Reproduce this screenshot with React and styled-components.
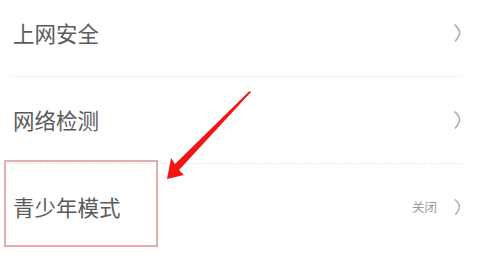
import React from "react";
import styled, { createGlobalStyle } from "styled-components";

const Global = createGlobalStyle`
  html, body { margin: 0; padding: 0; background: #ffffff; }
  body { width: 480px; height: 270px; overflow: hidden; font-family: "Noto Sans CJK SC", "Noto Sans", sans-serif; }
`;

const Page = styled.div`
  position: relative;
  width: 480px;
  height: 270px;
  overflow: hidden;
  background: #fff;
`;

const List = styled.div`
  display: flex;
  flex-direction: column;
  margin-top: -10px;
  padding-right: 18px;
`;

const Row = styled.div`
  height: 86px;
  display: flex;
  align-items: center;
  justify-content: space-between;
  margin-left: ${(p) => (p.$fullLine ? "0" : "10px")};
  padding-left: ${(p) => (p.$fullLine ? "13px" : "3px")};
  border-bottom: ${(p) =>
    p.$line === "solid" ? "1px solid #f3f3f3" : p.$line === "dotted" ? "1px dashed #ececec" : "none"};
`;

const Label = styled.span`
  font-size: 21.5px;
  color: #5a5a5a;
  line-height: 1;
`;

const Right = styled.div`
  display: flex;
  align-items: center;
  gap: 16px;
`;

const Value = styled.span`
  font-size: 12.5px;
  color: #9c9c9c;
  line-height: 1;
`;

const Highlight = styled.div`
  position: absolute;
  left: 4px;
  top: 160px;
  width: 150px;
  height: 83px;
  border: 2px solid #e4aeae;
`;

const ArrowSvg = styled.svg`
  position: absolute;
  left: 0;
  top: 0;
  pointer-events: none;
`;

const Chevron = ({ h = 20 }) => (
  <svg width="9" height={h} viewBox="0 0 9 20">
    <path d="M2 2 Q4 3.5 5.8 6.5 Q7 9 6.5 11 Q5.5 14 2.5 18" fill="none" stroke="#adadad" strokeWidth="1.6" strokeLinecap="round" />
  </svg>
);

export default function App() {
  return (
    <Page>
      <Global />
      <List>
        <Row $line="solid">
          <Label>上网安全</Label>
          <Right><Chevron /></Right>
        </Row>
        <Row $line="dotted" $fullLine>
          <Label>网络检测</Label>
          <Right><Chevron /></Right>
        </Row>
        <Row $fullLine>
          <Label>青少年模式</Label>
          <Right><Value>关闭</Value><Chevron h={18} /></Right>
        </Row>
      </List>
      <Highlight />
      <ArrowSvg width="480" height="270" viewBox="0 0 480 270">
        <polygon points="251,92 249.5,91 175,164 171,158 167,179 184,175 179,170" fill="#f41414" />
      </ArrowSvg>
    </Page>
  );
}
